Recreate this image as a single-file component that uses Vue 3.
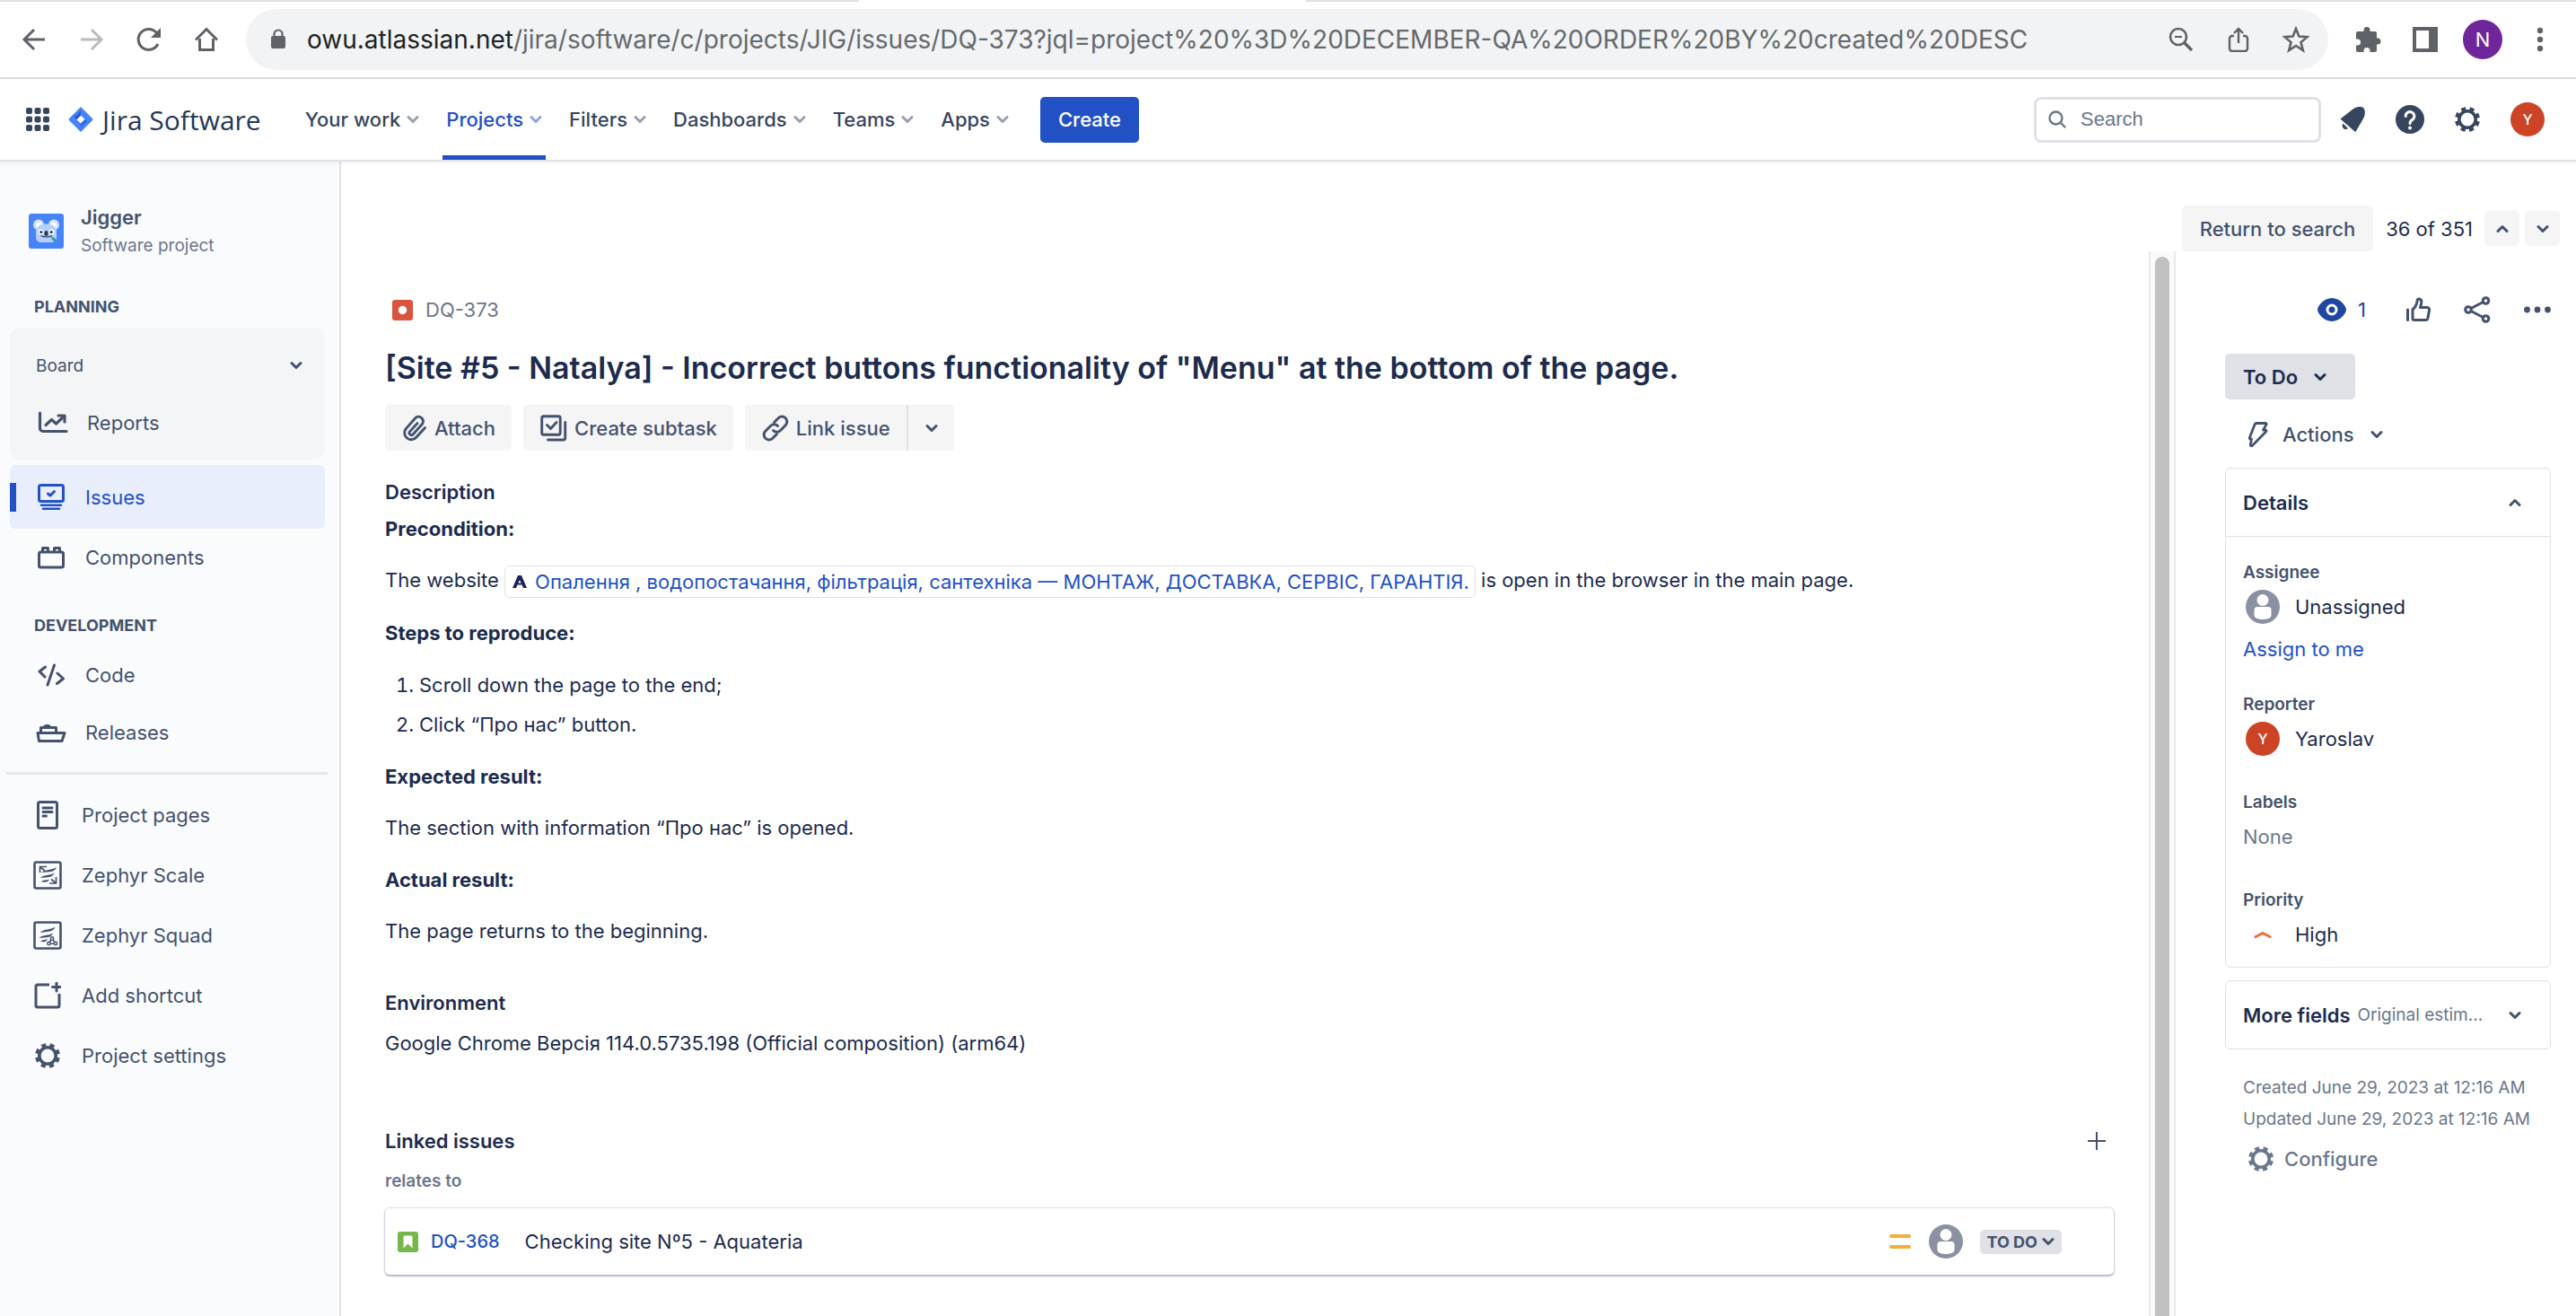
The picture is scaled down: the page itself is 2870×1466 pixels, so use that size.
<script setup>
import { h } from 'vue'

const shapes = {
  back: ['0 0 28 28', '<path d="M26 14H3M14 3 3 14l11 11" fill="none" stroke="currentColor" stroke-width="3"/>'],
  forward: ['0 0 28 28', '<path d="M2 14h23M14 3l11 11-11 11" fill="none" stroke="currentColor" stroke-width="3"/>'],
  reload: ['0 0 28 28', '<path d="M24 19A11.500 11.500 0 1 1 22.500 6.500" fill="none" stroke="currentColor" stroke-width="3"/><path d="M27 1v11H16z" fill="currentColor"/>'],
  home: ['0 0 28 28', '<path d="M6.500 13v12.500h15V13M2 14.500 14 2.500l12 12" fill="none" stroke="currentColor" stroke-width="3"/>'],
  lock: ['0 0 18 24', '<rect x="1" y="8" width="16" height="14" rx="2" fill="currentColor"/><path d="M4.500 9V6a4.500 4.500 0 0 1 9 0v3" fill="none" stroke="currentColor" stroke-width="2.200"/>'],
  zoomOut: ['0 0 28 28', '<g fill="none" stroke="currentColor" stroke-width="2.600"><circle cx="11" cy="11" r="9"/><path d="M17.500 17.500 26 26" stroke-width="3.400"/><path d="M7 11h8" stroke-width="2"/></g>'],
  upload: ['0 0 28 28', '<path d="M9 10H7a3 3 0 0 0-3 3v11a3 3 0 0 0 3 3h14a3 3 0 0 0 3-3V13a3 3 0 0 0-3-3h-2M14 18V2M9 7l5-5 5 5" fill="none" stroke="currentColor" stroke-width="2.400"/>'],
  star: ['0 0 30 30', '<path d="m15 3 3.400 8.600 9.100.6-7 5.900 2.300 8.900L15 22l-7.800 5 2.300-8.900-7-5.900 9.100-.6z" fill="none" stroke="currentColor" stroke-width="2.600"/>'],
  puzzle: ['0 0 30 30', '<path d="M10.500 4.500a3.500 3.500 0 0 1 7 0V6H23a2 2 0 0 1 2 2v5.500h1a3.500 3.500 0 0 1 0 7h-1V27a2 2 0 0 1-2 2h-5.500v-1.500a3.500 3.500 0 0 0-7 0V29H4a2 2 0 0 1-2-2v-5.500h1.500a3.500 3.500 0 0 0 0-7H2V8a2 2 0 0 1 2-2h6.500z" fill="currentColor"/>'],
  panel: ['0 0 28 28', '<path d="M0 0h28v28H0zM4 4v20h14V4z" fill="currentColor" fill-rule="evenodd"/>'],
  kebab: ['0 0 8 28', '<circle cx="4" cy="4" r="3.200"/><circle cx="4" cy="14" r="3.200"/><circle cx="4" cy="24" r="3.200"/>'],
  apps: ['0 0 26 26', '<rect width="7" height="7" rx="2"/><rect x="9.500" width="7" height="7" rx="2"/><rect x="19" width="7" height="7" rx="2"/><rect y="9.500" width="7" height="7" rx="2"/><rect x="9.500" y="9.500" width="7" height="7" rx="2"/><rect x="19" y="9.500" width="7" height="7" rx="2"/><rect y="19" width="7" height="7" rx="2"/><rect x="9.500" y="19" width="7" height="7" rx="2"/><rect x="19" y="19" width="7" height="7" rx="2"/>'],
  jira: ['0 0 28 28', '<path d="M14 0 27 13a1.500 1.500 0 0 1 0 2L14 28 1 15a1.500 1.500 0 0 1 0-2zm0 9.500L9.500 14l4.500 4.500 4.500-4.500z" fill="#4684f7" fill-rule="evenodd"/><path d="M14 3v6.500L9.500 14 6.500 11C10.500 9.500 13 6.500 14 3z" fill="#2358cf"/><path d="M14 25v-6.500l4.500-4.500 3 3c-4 1.500-6.500 4.500-7.500 8z" fill="#2f6ae4"/>'],
  chevron: ['0 0 14 14', '<path d="m2 4.500 5 5 5-5" fill="none" stroke="currentColor" stroke-width="3" stroke-linecap="round" stroke-linejoin="round"/>'],
  chevronUp: ['0 0 14 14', '<path d="m2 9.500 5-5 5 5" fill="none" stroke="currentColor" stroke-width="3" stroke-linecap="round" stroke-linejoin="round"/>'],
  search: ['0 0 20 20', '<circle cx="8.500" cy="8.500" r="7" fill="none" stroke="currentColor" stroke-width="2.400"/><path d="m13.500 13.500 5 5" stroke="currentColor" stroke-width="2.400" stroke-linecap="round"/>'],
  bell: ['0 0 28 28', '<path d="M1.500 13.500 15 3c3-2 7-3 10.500-1.500C28 5 27 9.500 25.500 12.500L17 27z" stroke="currentColor" stroke-width="1.500" stroke-linejoin="round"/><path d="M3.500 18.500 9 24c-1.500 1.500-4 1.500-5.200 0-1.300-1.500-1.500-4-.3-5.500z"/>'],
  help: ['0 0 32 32', '<circle cx="16" cy="16" r="16"/><path d="M11.200 12.500a4.800 4.800 0 1 1 7.300 4c-1.700 1-2.500 2-2.500 4" fill="none" stroke="#fff" stroke-width="3" stroke-linecap="round"/><circle cx="16" cy="25.500" r="2" fill="#fff"/>'],
  gear: ['0 0 28 28', '<circle cx="14" cy="14" r="9.200" fill="none" stroke="currentColor" stroke-width="3.600"/><circle cx="14" cy="14" r="12" fill="none" stroke="currentColor" stroke-width="4" stroke-dasharray="5 4.425" stroke-dashoffset="-2.200"/>'],
  koala: ['0 0 39 39', '<rect width="39" height="39" rx="3" fill="#4684f7"/><circle cx="11" cy="12.500" r="6" fill="#cfe0fd"/><circle cx="28" cy="12.500" r="6" fill="#cfe0fd"/><circle cx="11.500" cy="13" r="3.500" fill="#fff"/><circle cx="27.500" cy="13" r="3.500" fill="#fff"/><path d="M8 20c0-6 5-8.500 11.500-8.500S31 14 31 20v6c0 4-3 6-6 6H14c-4 0-6-2.500-6-6z" fill="#b6d0fb"/><circle cx="13.500" cy="20.500" r="3" fill="#fff"/><circle cx="25.500" cy="20.500" r="3" fill="#fff"/><circle cx="13.800" cy="20.500" r="1.600" fill="#253858"/><circle cx="25.200" cy="20.500" r="1.600" fill="#253858"/><rect x="17.500" y="19" width="4" height="6" rx="2" fill="#253858"/><path d="M13.500 24.500q6 3 12.500 0" fill="none" stroke="#253858" stroke-width="1.200"/><path d="M24.500 26c4-.5 6.500 2 7 5.500-4 0-6-2-7-5.500z" fill="#33a0a8"/>'],
  reports: ['0 0 34 26', '<g fill="none" stroke="currentColor" stroke-width="3.200" stroke-linecap="round" stroke-linejoin="round"><path d="M2.500 2v17a3.500 3.500 0 0 0 3.500 3.500h26"/><path d="m9 15.500 6.500-6 5 4.500 8.500-8"/><path d="M23 5h7v7"/></g>'],
  issues: ['0 0 30 30', '<g fill="none" stroke="currentColor" stroke-width="3" stroke-linejoin="round" stroke-linecap="round"><rect x="1.500" y="1.500" width="27" height="18" rx="2"/><path d="m11.500 11 2.500 2 4.500-4.500"/><path d="M4 23.700h22M6 27.800h18" stroke-width="2.600"/></g>'],
  components: ['0 0 30 26', '<g fill="none" stroke="currentColor" stroke-width="3" stroke-linejoin="round"><rect x="1.500" y="7" width="27" height="17" rx="2"/><path d="M5.500 6.500V2.500h6v4M18.500 6.500V2.500h6v4"/></g>'],
  code: ['0 0 30 26', '<g fill="none" stroke="currentColor" stroke-width="3" stroke-linejoin="round" stroke-linecap="round"><path d="m8.500 4-6.500 5 6 6M18.500 2 11 24M22 11l6.500 6-7 5.500"/></g>'],
  releases: ['0 0 34 24', '<g fill="none" stroke="currentColor" stroke-width="3" stroke-linejoin="round"><path d="M2 12.500h30l-3 9H3.500zM5.500 12V6.500h17V12"/><path d="M9 6a4 3.500 0 0 1 7 0"/></g>'],
  pages: ['0 0 24 32', '<g fill="none" stroke="currentColor" stroke-width="3" stroke-linejoin="round" stroke-linecap="round"><rect x="1.500" y="1.500" width="21" height="29" rx="2"/><path d="M7 8h10M7 12.500h10M7 17h3.500"/></g>'],
  zephyrScale: ['0 0 32 32', '<rect x="1.500" y="1.500" width="29" height="29" rx="2" fill="none" stroke="currentColor" stroke-width="2.600"/><path d="M9 13c5-4 11-2 17-6-2 6-8 5-17 6zM8 19c5-4.500 10-2 15.500-5.500C21.500 19 16 18 8 19zM9 23c3-2.500 6-1 9-2.500-1.500 4-6 3.500-9 2.500z"/><path d="M7.500 13V6.500H15M8 7l5 4M25.500 18v7H18M25 24.500l-5-4" fill="none" stroke="currentColor" stroke-width="1.700"/>'],
  zephyrSquad: ['0 0 32 32', '<rect x="1.500" y="1.500" width="29" height="29" rx="2" fill="none" stroke="currentColor" stroke-width="2.600"/><path d="M7.500 13c5-5 11-2.500 17-6.500-2 6-8 5-17 6.500zM6.500 19c5-4.500 10-2 15.500-5.500C20 19 14.500 18 6.500 19zM8 22.500c3-2 5-1 8-2.500-1.500 4-5 3.500-8 2.500z"/><g fill="none" stroke="currentColor" stroke-width="1.500"><circle cx="21" cy="19.500" r="1.700"/><circle cx="17.500" cy="25" r="1.700"/><circle cx="25" cy="25" r="1.700"/><path d="m20 21-1.700 2.500M22 21l2 2.500M19.500 25.200h3.500"/></g>'],
  shortcut: ['0 0 30 30', '<path d="M17 3H4a2 2 0 0 0-2 2v21a2 2 0 0 0 2 2h22a2 2 0 0 0 2-2V13" fill="none" stroke="currentColor" stroke-width="3"/><path d="M25 1v9M20.500 5.500h9" fill="none" stroke="currentColor" stroke-width="3" stroke-linecap="round"/>'],
  bug: ['0 0 23 23', '<rect width="23" height="23" rx="3" fill="#d9533f"/><circle cx="11.500" cy="11.500" r="4.700" fill="#fff"/>'],
  story: ['0 0 23 23', '<rect width="23" height="23" rx="3" fill="#76b74b"/><path d="M6.500 18.500V6A1.500 1.500 0 0 1 8 4.500h7A1.500 1.500 0 0 1 16.500 6v12.500l-5-5z" fill="#fff"/>'],
  clip: ['0 0 28 30', '<path d="m25.500 14.500-9.800 10.800a7.500 7.500 0 0 1-11-10.200L14.500 4a5 5 0 0 1 7.600 6.800l-9.800 11a2.400 2.400 0 0 1-3.600-3.200L17 9.500" fill="none" stroke="currentColor" stroke-width="2.900" stroke-linecap="round"/>'],
  subtask: ['0 0 30 30', '<g fill="none" stroke="currentColor" stroke-width="2.900" stroke-linecap="round" stroke-linejoin="round"><rect x="1.700" y="1.700" width="20.500" height="20.500" rx="2"/><path d="m7.500 11.500 4 4 6.500-7M27.700 8.500V26a2 2 0 0 1-2 2H8.500"/></g>'],
  link: ['0 0 30 30', '<g fill="none" stroke="currentColor" stroke-width="3" stroke-linecap="round"><path d="m13.500 8.500 4.700-4.800a5.500 5.500 0 0 1 8 8L20.500 17.500a5.500 5.500 0 0 1-8 0"/><path d="m16.500 21.500-4.700 4.800a5.500 5.500 0 0 1-8-8L9.500 12.500a5.500 5.500 0 0 1 8 0"/></g>'],
  site: ['0 0 16 14', '<path d="M0 14 6 0h4l6 14h-4L8 5l-4 9z" fill="#1b2559"/><path d="M5.500 9.500h5" stroke="#1b2559" stroke-width="2"/>'],
  plus: ['0 0 20 20', '<path d="M10 0v20M0 10h20" stroke="currentColor" stroke-width="2"/>'],
  medium: ['0 0 24 16', '<path d="M2 2h20M2 14h20" stroke="#f5ad3c" stroke-width="4" stroke-linecap="round"/>'],
  high: ['0 0 20 10', '<path d="m2 7.500 8-4 8 4" fill="none" stroke="#f4683f" stroke-width="3" stroke-linecap="round" stroke-linejoin="round"/>'],
  person: ['0 0 38 38', '<circle cx="19" cy="19" r="19" fill="#8a91a2"/><circle cx="19" cy="11.500" r="6.500" fill="#fff"/><path d="M9.500 22.500a3.500 3.500 0 0 1 3.500-3.500h12a3.500 3.500 0 0 1 3.500 3.500v6c0 6-19 6-19 0z" fill="#fff"/>'],
  eye: ['0 0 32 26', '<path d="M16 0C7 0 0 9 0 13s7 13 16 13 16-9 16-13S25 0 16 0z"/><circle cx="16" cy="13" r="5" fill="none" stroke="#fff" stroke-width="3"/>'],
  thumb: ['0 0 28 28', '<g fill="none" stroke="currentColor" stroke-width="3" stroke-linejoin="round" stroke-linecap="round"><path d="M2.500 14v11.500"/><path d="M8 13.500c4-2.500 4.500-6 5-9 .5-3.500 5-3 4.800.8-.1 2.500-.8 4.200-1.300 6.200h7.500a2.500 2.500 0 0 1 2.500 3l-1.600 9a2.500 2.500 0 0 1-2.500 2H10a2 2 0 0 1-2-2z"/></g>'],
  share: ['0 0 30 30', '<g fill="none" stroke="currentColor" stroke-width="3"><circle cx="5" cy="15" r="3.300"/><circle cx="24.500" cy="5" r="3.300"/><circle cx="24.500" cy="25" r="3.300"/><path d="m8 13.500 13.500-7M8 16.500l13.500 7"/></g>'],
  dots: ['0 0 30 8', '<circle cx="3.500" cy="4" r="3.400"/><circle cx="15" cy="4" r="3.400"/><circle cx="26.500" cy="4" r="3.400"/>'],
  bolt: ['0 0 22 28', '<path d="M9 1.500h10a1 1 0 0 1 1 1.400L16.500 9H19a1 1 0 0 1 .7 1.700L4.500 26.200c-1.200 1.100-2.500.3-2.200-1l1.200-6.200H2.200a1 1 0 0 1-.8-1.500L7 3c.5-1 1-1.500 2-1.500z" fill="none" stroke="currentColor" stroke-width="2.800" stroke-linejoin="round"/>'],
}

const Icon = (props) =>
  h('svg', {
    viewBox: shapes[props.name][0],
    width: shapes[props.name][0].split(' ')[2],
    height: shapes[props.name][0].split(' ')[3],
    fill: 'currentColor',
    'aria-hidden': 'true',
    innerHTML: shapes[props.name][1],
  })
Icon.props = ['name']

const browserActions = [
  ['back', 'Back'],
  ['forward', 'Forward'],
  ['reload', 'Reload'],
  ['home', 'Home'],
]
const menus = ['Your work', 'Projects', 'Filters', 'Dashboards', 'Teams', 'Apps']
const development = [
  ['code', 'Code'],
  ['releases', 'Releases'],
]
const shortcuts = [
  ['pages', 'Project pages'],
  ['zephyrScale', 'Zephyr Scale'],
  ['zephyrSquad', 'Zephyr Squad'],
  ['shortcut', 'Add shortcut'],
  ['gear', 'Project settings'],
]
</script>

<template>
  <div class="page">
    <div class="tabs"><span class="tab-gap"></span></div>
    <header class="chrome">
      <button v-for="[icon, label] in browserActions" :key="icon" class="slot" :class="{ off: icon === 'forward' }" :aria-label="label">
        <Icon :name="icon" />
      </button>
      <div class="address">
        <Icon name="lock" />
        <div class="url" role="textbox" aria-label="Address"><b>owu.atlassian.net</b>/jira/software/c/projects/JIG/issues/DQ-373?jql=project%20%3D%20DECEMBER-QA%20ORDER%20BY%20created%20DESC</div>
        <button class="slot" aria-label="Zoom out"><Icon name="zoomOut" /></button>
        <button class="slot" aria-label="Share page"><Icon name="upload" /></button>
        <button class="slot" aria-label="Bookmark"><Icon name="star" /></button>
      </div>
      <button class="slot" aria-label="Extensions"><Icon name="puzzle" /></button>
      <button class="slot" aria-label="Side panel"><Icon name="panel" /></button>
      <button class="slot" aria-label="Profile"><span class="profile">N</span></button>
      <button class="slot" aria-label="Browser menu"><Icon name="kebab" /></button>
    </header>

    <header class="topnav">
      <button class="apps" aria-label="Switch apps"><Icon name="apps" /></button>
      <a href="#" class="logo"><Icon name="jira" />Jira Software</a>
      <nav class="menus">
        <button v-for="m in menus" :key="m" class="menu" :class="{ active: m === 'Projects' }">{{ m }}<Icon name="chevron" /></button>
      </nav>
      <button class="create">Create</button>
      <label class="search">
        <Icon name="search" />
        <input type="text" placeholder="Search" aria-label="Search" />
      </label>
      <button class="slot" aria-label="Notifications"><Icon name="bell" /></button>
      <button class="slot" aria-label="Help"><Icon name="help" /></button>
      <button class="slot" aria-label="Settings"><Icon name="gear" /></button>
      <button class="slot last" aria-label="Your profile"><span class="avatar">Y</span></button>
    </header>

    <div class="body">
      <aside class="sidebar">
        <div class="project">
          <Icon name="koala" />
          <div>
            <div class="project-name">Jigger</div>
            <div class="project-kind">Software project</div>
          </div>
        </div>
        <h2 class="group">PLANNING</h2>
        <div class="board">
          <button class="board-head">Board<Icon name="chevron" /></button>
          <a href="#" class="item report"><span class="glyph"><Icon name="reports" /></span>Reports</a>
        </div>
        <a href="#" class="item current"><span class="glyph"><Icon name="issues" /></span>Issues</a>
        <a href="#" class="item"><span class="glyph"><Icon name="components" /></span>Components</a>
        <h2 class="group dev">DEVELOPMENT</h2>
        <a v-for="[icon, label] in development" :key="label" href="#" class="item"><span class="glyph"><Icon :name="icon" /></span>{{ label }}</a>
        <hr class="rule" />
        <a v-for="[icon, label] in shortcuts" :key="label" href="#" class="item tall"><span class="glyph"><Icon :name="icon" /></span>{{ label }}</a>
      </aside>

      <div class="work">
        <div class="pager">
          <button class="soft">Return to search</button>
          <span class="count">36 of 351</span>
          <button class="step" aria-label="Previous issue"><Icon name="chevronUp" /></button>
          <button class="step" aria-label="Next issue"><Icon name="chevron" /></button>
        </div>
        <div class="columns">
          <main class="issue">
            <a href="#" class="crumb"><Icon name="bug" />DQ-373</a>
            <h1>[Site #5 - Natalya] - Incorrect buttons functionality of "Menu" at the bottom of the page.</h1>
            <div class="actions">
              <button class="soft"><Icon name="clip" />Attach</button>
              <button class="soft"><Icon name="subtask" />Create subtask</button>
              <div class="split">
                <button class="soft"><Icon name="link" />Link issue</button>
                <button class="soft more" aria-label="More link options"><Icon name="chevron" /></button>
              </div>
            </div>
            <h2 class="section">Description</h2>
            <h3 class="close">Precondition:</h3>
            <p>The website <a href="#" class="chip"><Icon name="site" />Опалення , водопостачання, фільтрація, сантехніка — МОНТАЖ, ДОСТАВКА, СЕРВІС, ГАРАНТІЯ.</a> is open in the browser in the main page.</p>
            <h3>Steps to reproduce:</h3>
            <ol>
              <li>Scroll down the page to the end;</li>
              <li>Click “Про нас” button.</li>
            </ol>
            <h3>Expected result:</h3>
            <p>The section with information “Про нас” is opened.</p>
            <h3>Actual result:</h3>
            <p>The page returns to the beginning.</p>
            <h2 class="section env">Environment</h2>
            <p class="near">Google Chrome Версія 114.0.5735.198 (Official composition) (arm64)</p>
            <div class="linked">
              <h2 class="section">Linked issues</h2>
              <button aria-label="Link an issue"><Icon name="plus" /></button>
            </div>
            <div class="relation">relates to</div>
            <div class="card">
              <Icon name="story" />
              <a href="#" class="key">DQ-368</a>
              <span class="summary">Checking site Nº5 - Aquateria</span>
              <Icon name="medium" />
              <Icon name="person" />
              <button class="badge">TO DO<Icon name="chevron" /></button>
            </div>
          </main>
          <div class="track"><div class="thumb"></div></div>
          <aside class="side">
            <div class="tools">
              <button class="watch"><Icon name="eye" />1</button>
              <button aria-label="Vote"><Icon name="thumb" /></button>
              <button aria-label="Share"><Icon name="share" /></button>
              <button aria-label="More actions"><Icon name="dots" /></button>
            </div>
            <button class="status">To Do<Icon name="chevron" /></button>
            <button class="automation"><Icon name="bolt" />Actions<Icon name="chevron" /></button>
            <section class="box">
              <button class="box-head">Details<Icon name="chevronUp" /></button>
              <div class="fields">
                <h4>Assignee</h4>
                <div class="value"><span class="mark"><Icon name="person" /></span>Unassigned</div>
                <a href="#" class="assign">Assign to me</a>
                <h4>Reporter</h4>
                <div class="value"><span class="mark"><span class="avatar">Y</span></span>Yaroslav</div>
                <h4>Labels</h4>
                <div class="value none">None</div>
                <h4>Priority</h4>
                <div class="value"><span class="mark"><Icon name="high" /></span>High</div>
              </div>
            </section>
            <section class="box">
              <button class="box-head">More fields<small>Original estim...</small><Icon name="chevron" /></button>
            </section>
            <div class="dates">
              <div>Created June 29, 2023 at 12:16 AM</div>
              <div>Updated June 29, 2023 at 12:16 AM</div>
            </div>
            <button class="configure"><Icon name="gear" />Configure</button>
          </aside>
        </div>
      </div>
    </div>
  </div>
</template>

<style>
body {
  margin: 0;
  background: #fff;
}
</style>

<style scoped>
.page {
  min-height: 100vh;
  display: flex;
  flex-direction: column;
  font-family: Inter, 'Liberation Sans', sans-serif;
  font-size: 22px;
  color: #1c2b4e;
}
.page * {
  box-sizing: border-box;
}
svg {
  flex: none;
  display: block;
}
button {
  border: 0;
  padding: 0;
  margin: 0;
  background: none;
  font: inherit;
  color: inherit;
  display: flex;
  align-items: center;
}
a {
  color: inherit;
  text-decoration: none;
}
h1, h2, h3, h4, p, ol {
  margin: 0;
}

/* browser bar */
.tabs {
  height: 2px;
  background: #dfdfe4;
  padding-left: 957px;
}
.tab-gap {
  display: block;
  width: 498px;
  height: 2px;
  background: #fff;
}
.chrome {
  height: 86px;
  display: flex;
  align-items: center;
  padding: 0 8px 0 6px;
  border-bottom: 2px solid #dcdcde;
  color: #5f6368;
}
.slot {
  width: 64px;
  height: 64px;
  flex: none;
  justify-content: center;
}
.off {
  color: #b9bbbe;
}
.address {
  flex: 1;
  min-width: 0;
  height: 68px;
  display: flex;
  align-items: center;
  margin: 0 12px;
  padding: 0 4px 0 27px;
  border-radius: 34px;
  background: #f1f3f4;
}
.url {
  flex: 1;
  min-width: 0;
  margin-left: 23px;
  font-size: 28px;
  white-space: nowrap;
  overflow: hidden;
  color: #66696d;
}
.url b {
  font-weight: 400;
  color: #202124;
}
.profile {
  width: 44px;
  line-height: 44px;
  border-radius: 50%;
  background: #70269b;
  color: #fff;
  text-align: center;
}

/* product navigation */
.topnav {
  height: 92px;
  display: flex;
  align-items: center;
  padding: 0 22px 0 29px;
  border-bottom: 2px solid #dfe1e6;
  box-shadow: 0 2px 4px rgba(9, 30, 66, 0.06);
  color: #37465f;
  position: relative;
}
.logo {
  display: flex;
  align-items: center;
  gap: 10px;
  margin-left: 21px;
  font: 30px 'Open Sans', sans-serif;
  color: #253858;
  white-space: nowrap;
}
.menus {
  display: flex;
  align-self: stretch;
  gap: 22px;
  margin: 0 31px 0 45px;
}
.menu {
  gap: 7px;
  padding: 5px 4px 0;
  border-bottom: 5px solid transparent;
  font-weight: 500;
  white-space: nowrap;
}
.menu svg {
  opacity: 0.5;
}
.menu.active {
  color: #2251c5;
  border-color: #2251c5;
}
.create {
  height: 51px;
  padding: 0 20px;
  border-radius: 5px;
  background: #2251c5;
  color: #fff;
  font-weight: 500;
}
.search {
  width: 320px;
  height: 51px;
  margin: 0 3px 0 auto;
  padding: 0 13px;
  display: flex;
  align-items: center;
  gap: 16px;
  border: 3px solid #dfe1e6;
  border-radius: 8px;
  color: #6b778c;
}
.search input {
  flex: 1;
  min-width: 0;
  border: 0;
  padding: 0;
  background: none;
  font: 22px 'Liberation Sans', sans-serif;
  color: inherit;
}
.search input::placeholder {
  color: #6b778c;
  opacity: 1;
}
.last {
  margin-left: 3px;
}
.avatar {
  width: 38px;
  line-height: 38px;
  border-radius: 50%;
  background: #cc4425;
  color: #fff;
  font-size: 16px;
  font-weight: 500;
  text-align: center;
}

/* project sidebar */
.body {
  flex: 1;
  display: flex;
}
.sidebar {
  width: 380px;
  flex: none;
  padding: 45px 16px 0 11px;
  border-right: 2px solid #e3e4e6;
  background: #fafbfd;
  color: #44526d;
}
.project {
  display: flex;
  align-items: center;
  gap: 19px;
  padding-left: 21px;
}
.project-name {
  line-height: 34px;
  font-weight: 600;
}
.project-kind {
  line-height: 30px;
  font-size: 19px;
  color: #6b778c;
}
.group {
  margin: 41px 0 11px 27px;
  font-size: 18px;
  line-height: 24px;
  font-weight: 700;
}
.dev {
  margin-top: 32px;
}
.board {
  height: 147px;
  margin-bottom: 6px;
  padding-top: 10px;
  border-radius: 12px;
  background: #f4f5f7;
}
.board-head {
  width: 100%;
  height: 64px;
  padding: 0 25px 0 29px;
  justify-content: space-between;
  font-size: 19px;
}
.item {
  height: 64px;
  display: flex;
  align-items: center;
  padding-left: 26px;
}
.glyph {
  width: 40px;
  margin-right: 18px;
  display: flex;
  justify-content: center;
}
.report {
  padding-left: 28px;
}
.current {
  height: 71px;
  border-radius: 6px;
  background: linear-gradient(#2251c5, #2251c5) 0 50% / 7px 32px no-repeat, #e8eefb;
  color: #2251c5;
}
.rule {
  height: 3px;
  margin: 12px -3px 11px -4px;
  border: 0;
  background: #e6e7ea;
}
.tall {
  height: 67px;
  padding-left: 22px;
}

/* issue */
.work {
  flex: 1;
  min-width: 0;
  display: flex;
  flex-direction: column;
}
.pager {
  display: flex;
  justify-content: flex-end;
  align-items: center;
  padding: 49px 18px 0 0;
}
.soft {
  height: 51px;
  padding: 0 20px;
  border-radius: 5px;
  background: #f5f5f6;
  color: #44526d;
  font-weight: 500;
  white-space: nowrap;
}
.count {
  margin: 0 13px 0 14px;
}
.step {
  width: 39px;
  height: 39px;
  justify-content: center;
  border-radius: 5px;
  background: #f5f5f6;
  color: #44526d;
}
.step + .step {
  margin-left: 6px;
}
.columns {
  flex: 1;
  display: flex;
}
.issue {
  flex: 1;
  min-width: 0;
  padding: 53px 39px 0 49px;
}
.crumb {
  display: flex;
  align-items: center;
  gap: 14px;
  height: 24px;
  padding-left: 8px;
  color: #6b778c;
}
h1 {
  margin: 31px 0 19px;
  font-size: 34px;
  line-height: 44px;
  font-weight: 600;
}
.actions {
  display: flex;
  gap: 13px;
  margin-bottom: 27px;
}
.actions .soft {
  gap: 8px;
  padding: 0 18px 0 19px;
}
.split {
  display: flex;
  gap: 2px;
  background: #dfe1e6;
  border-radius: 5px;
}
.split .soft:first-child {
  border-radius: 5px 0 0 5px;
}
.split .more {
  border-radius: 0 5px 5px 0;
}
.section {
  font-size: 22px;
  line-height: 38px;
  font-weight: 600;
}
h3 {
  margin-top: 20px;
  font-size: 22px;
  line-height: 38px;
  font-weight: 700;
}
.close {
  margin-top: 3px;
}
p {
  margin-top: 19px;
  line-height: 38px;
}
.chip {
  display: inline-flex;
  align-items: center;
  gap: 9px;
  height: 36px;
  padding: 0 6px 0 8px;
  border: 1px solid #dfe1e6;
  border-radius: 6px;
  color: #2251c5;
  vertical-align: middle;
}
ol {
  margin-top: 20px;
  padding-left: 38px;
}
li + li {
  margin-top: 6px;
}
li {
  line-height: 38px;
}
.env {
  margin-top: 42px;
}
.near {
  margin-top: 7px;
}
.linked {
  display: flex;
  justify-content: space-between;
  margin: 71px 9px 7px 0;
}
.linked button,
.automation,
.tools {
  color: #44526d;
}
.relation {
  line-height: 38px;
  margin-bottom: 11px;
  font-size: 19px;
  font-weight: 600;
  color: #6b778c;
}
.card {
  height: 74px;
  display: flex;
  align-items: center;
  padding: 0 58px 0 14px;
  border-radius: 5px;
  box-shadow: 0 0 2px 1px rgba(9, 30, 66, 0.16), 0 2px 2px rgba(9, 30, 66, 0.25);
}
.key {
  margin: 0 28px 0 14px;
  font-size: 20px;
  font-weight: 500;
  color: #2251c5;
}
.summary {
  flex: 1;
}
.badge {
  height: 27px;
  margin-left: 19px;
  padding: 0 8px;
  gap: 5px;
  border-radius: 5px;
  background: #dfe1e6;
  color: #44526d;
  font-size: 18px;
  font-weight: 700;
}
.card svg + svg {
  margin-left: 20px;
}
.track {
  width: 30px;
  flex: none;
  display: flex;
  justify-content: center;
  padding-top: 6px;
  border: solid #e8e8e8;
  border-width: 0 2px;
  background: #fafafa;
}
.thumb {
  width: 16px;
  border-radius: 8px 8px 0 0;
  background: #c1c1c1;
}

/* details column */
.side {
  width: 446px;
  flex: none;
  padding: 46px 28px 0 55px;
}
.tools {
  height: 38px;
  display: flex;
  justify-content: flex-end;
  gap: 37px;
}
.watch {
  gap: 13px;
  margin-right: 7px;
  color: #1f46a0;
}
.status {
  height: 51px;
  margin: 30px 0 20px;
  padding: 0 32px 0 20px;
  gap: 18px;
  border-radius: 5px;
  background: #dfe1e6;
  font-weight: 600;
}
.automation {
  height: 38px;
  padding-left: 26px;
  font-weight: 500;
}
.automation svg:first-child {
  margin-right: 16px;
}
.automation svg:last-child {
  margin-left: 18px;
}
.box {
  margin-top: 18px;
  border: 1px solid #dfe1e6;
  border-radius: 6px;
}
.box + .box {
  margin-top: 14px;
}
.box-head {
  width: 100%;
  height: 75px;
  padding: 0 32px 0 19px;
  font-weight: 600;
}
.box-head svg {
  margin-left: auto;
  color: #44526d;
}
.box-head small {
  margin-left: 8px;
  font-size: 19px;
  font-weight: 400;
  color: #6b778c;
}
.fields {
  padding: 26px 19px 17px;
  border-top: 1px solid #dfe1e6;
}
h4 {
  font-size: 19px;
  line-height: 28px;
  font-weight: 600;
  color: #44526d;
}
.value {
  height: 38px;
  margin: 5px 0 38px;
  display: flex;
  align-items: center;
}
.value:last-child {
  margin-bottom: 0;
}
.none {
  color: #6b778c;
}
.mark {
  width: 44px;
  margin-right: 14px;
  display: flex;
  justify-content: center;
}
.assign {
  display: block;
  margin: -24px 0 34px;
  line-height: 28px;
  color: #2251c5;
}
.dates {
  margin: 25px 0 8px 20px;
  font-size: 19px;
  line-height: 35px;
  color: #6b778c;
  white-space: nowrap;
}
.configure {
  height: 38px;
  padding-left: 26px;
  gap: 12px;
  font-weight: 500;
  color: #6b778c;
}
</style>
